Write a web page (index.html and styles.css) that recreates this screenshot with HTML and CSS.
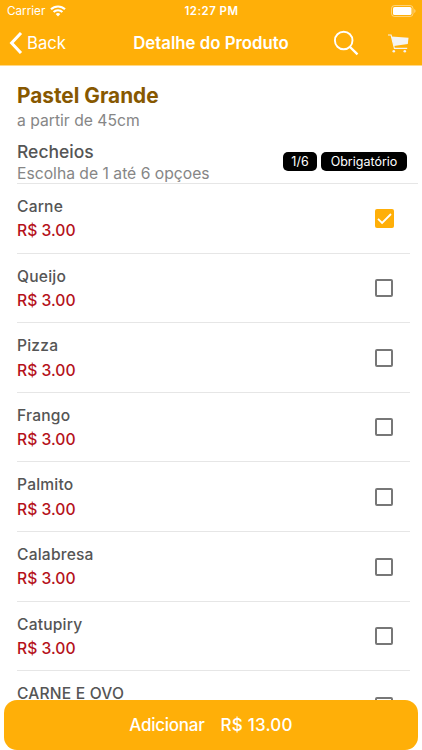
FILE: index.html
```html
<!DOCTYPE html>
<html lang="pt-BR">
<head>
<meta charset="utf-8">
<title>Detalhe do Produto</title>
<link rel="stylesheet" href="styles.css">
</head>
<body>
<div class="app">
  <header class="header">
    <div class="status">
      <div class="carrier"><span>Carrier</span>
        <svg width="16" height="12" viewBox="0 0 16 12" fill="none" stroke="#fff" stroke-width="2.1"><path d="M1 4.3a10 10 0 0 1 14 0M3.6 7.1a6.2 6.2 0 0 1 8.8 0"/><path d="M8 11.4 5.7 9.1a3.3 3.3 0 0 1 4.6 0z" fill="#fff" stroke="none"/></svg>
      </div>
      <div class="time">12:27 PM</div>
      <div class="battery"><svg width="25" height="12" viewBox="0 0 25 12"><rect x=".5" y=".5" width="21.5" height="11" rx="3" fill="none" stroke="#fff" stroke-opacity=".45"/><rect x="2" y="2" width="18.5" height="8" rx="1.6" fill="#fff"/><path d="M23.3 4v4q1.2-.5 1.2-2t-1.2-2" fill="#fff" fill-opacity=".5"/></svg></div>
    </div>
    <nav class="nav">
      <div class="back"><svg width="14" height="22" viewBox="0 0 14 22" fill="none" stroke="#fff" stroke-width="3"><path d="M12 1 2.6 11 12 21"/></svg><span>Back</span></div>
      <h1 class="title">Detalhe do Produto</h1>
      <div class="actions">
        <svg width="26" height="26" viewBox="0 0 26 26" fill="none" stroke="#fff" stroke-width="1.9"><circle cx="10.7" cy="10.5" r="8.8"/><path d="m17 17 7.5 7.3" stroke-width="2.4"/></svg>
        <svg class="cart" width="21" height="19" viewBox="0 0 21 19"><path d="M3.4 2.6 20.5 3.8 19.8 10 5.9 12z" fill="#f4f4f4"/><path d="M0 1h3.1l3.3 13.4h12.8" fill="none" stroke="#f4f4f4" stroke-width="1.1"/><circle cx="5.8" cy="17.2" r="1.3" fill="#f4f4f4"/><circle cx="16.8" cy="17.2" r="1.3" fill="#f4f4f4"/></svg>
      </div>
    </nav>
  </header>
  <main class="content">
    <h2 class="product">Pastel Grande</h2>
    <p class="description">a partir de 45cm</p>
    <section class="group">
      <div><h3 class="group-name">Recheios</h3><p class="hint">Escolha de 1 até 6 opçoes</p></div>
      <div class="badges"><span class="badge count">1/6</span><span class="badge required">Obrigatório</span></div>
    </section>
    <ul class="options">
      <li class="option"><div><p class="name">Carne</p><p class="price">R$ 3.00</p></div><span class="check checked"><svg width="19" height="19" viewBox="0 0 19 19" fill="none" stroke="#fff" stroke-width="1.8"><path d="m3 9.8 4.1 4.2 8.9-9"/></svg></span></li>
      <li class="option"><div><p class="name">Queijo</p><p class="price">R$ 3.00</p></div><span class="check"></span></li>
      <li class="option"><div><p class="name">Pizza</p><p class="price">R$ 3.00</p></div><span class="check"></span></li>
      <li class="option"><div><p class="name">Frango</p><p class="price">R$ 3.00</p></div><span class="check"></span></li>
      <li class="option"><div><p class="name">Palmito</p><p class="price">R$ 3.00</p></div><span class="check"></span></li>
      <li class="option"><div><p class="name">Calabresa</p><p class="price">R$ 3.00</p></div><span class="check"></span></li>
      <li class="option"><div><p class="name">Catupiry</p><p class="price">R$ 3.00</p></div><span class="check"></span></li>
      <li class="option"><div><p class="name">CARNE E OVO</p></div><span class="check"></span></li>
    </ul>
  </main>
  <footer class="add"><span class="add-label">Adicionar</span><span class="add-price">R$ 13.00</span></footer>
</div>
</body>
</html>
```
FILE: styles.css
```css
* { box-sizing: border-box; margin: 0; padding: 0; }
body { background: #fff; font-family: Inter, "Liberation Sans", sans-serif; overflow: hidden; }
svg { display: block; flex: none; }
.app { width: 422px; height: 750px; overflow: hidden; display: flex; flex-direction: column; white-space: nowrap; }
.header { flex: none; height: 66px; background: #ffaf08; color: #fff; border-bottom: 1px solid #ffd887; }
.status { height: 22px; display: grid; grid-template-columns: 1fr auto 1fr; align-items: center; padding: 0 6px 0 7px; font-size: 11.7px; line-height: 22px; }
.carrier { display: flex; gap: 5px; align-items: center; }
.time { font-weight: 600; font-size: 11.4px; letter-spacing: .5px; }
.battery { justify-self: end; }
.battery svg { margin-top: -1px; }
.nav { height: 42px; display: grid; grid-template-columns: 1fr auto 1fr; align-items: center; padding: 0 13px 0 9px; }
.back { display: flex; gap: 4px; align-items: center; font-size: 16.7px; }
.title { font-size: 16.8px; font-weight: 600; padding-left: 4px; }
.actions { display: flex; justify-content: flex-end; gap: 29px; align-items: center; }
.content { flex: 1; min-height: 0; overflow: hidden; padding: 17px 4px 0 17px; }
.product { color: #875800; font-size: 20.8px; line-height: 26px; font-weight: 700; }
.description { color: #868686; font-size: 15.7px; line-height: 23px; }
.group { height: 52px; display: flex; justify-content: space-between; border-bottom: 1px solid #e6e6e6; padding-top: 9px; }
.group-name { color: #555; font-size: 17.5px; line-height: 22px; font-weight: 500; }
.hint { color: #868686; font-size: 15.7px; line-height: 21px; }
.badges { display: flex; gap: 4px; padding: 11px 11px 0 0; }
.badge { height: 19px; line-height: 19px; border-radius: 5px; background: #000; color: #fff; font-size: 12.5px; text-align: center; }
.count { width: 34px; }
.required { width: 86px; }
.options { list-style: none; margin-right: 8px; }
.option { height: 69.6px; border-bottom: 1px solid #e6e6e6; display: flex; justify-content: space-between; padding: 11px 17px 0 0; }
.name { color: #555; font-size: 15.6px; line-height: 24.4px; font-weight: 500; letter-spacing: .2px; }
.price { color: #b5121b; font-size: 15.7px; line-height: 24.6px; font-weight: 500; }
.check { width: 18px; height: 18px; margin-top: 14.6px; border: 2px solid #777; border-radius: 2px; }
.checked { width: 19px; height: 19px; margin: 14px -1px 0 0; border: 0; background: #ffaf08; }
.add { flex: none; height: 50px; margin: 0 4px; border-radius: 13px; background: #ffaf08; color: #fff; display: flex; justify-content: center; align-items: center; gap: 16px; font-size: 17px; font-weight: 500; padding-bottom: 1px; }
.add-label { letter-spacing: -.25px; }
.add-price { letter-spacing: .2px; }
```
